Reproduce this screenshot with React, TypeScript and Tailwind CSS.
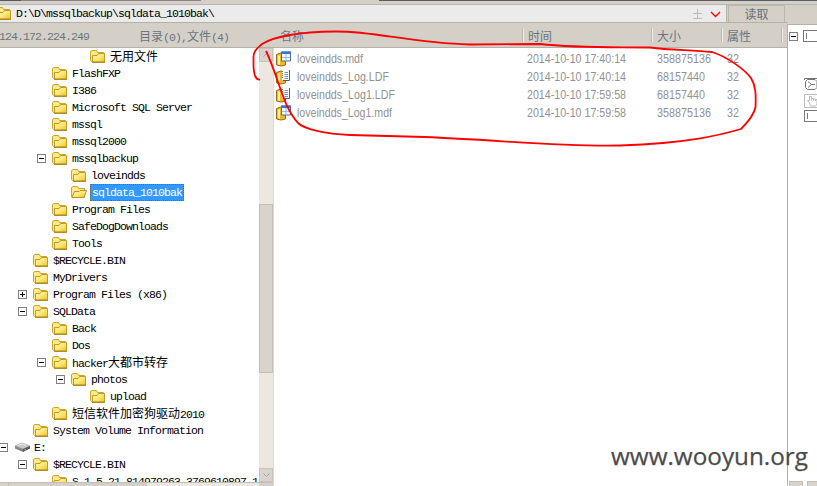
import React from "react";

const mono = "font-['Liberation_Mono','Noto_Sans_CJK_SC',monospace] text-[11.5px] tracking-[-0.9px]";
const cjk = "font-['Noto_Sans_CJK_SC',sans-serif] text-[12px] tracking-[0px]";

function Mixed({ text }: { text: string }) {
  const runs = text.split(/([\u4e00-\u9fff]+)/).filter(Boolean);
  return (
    <span className={`${mono} whitespace-pre leading-[17px]`}>
      {runs.map((r, i) => (/[\u4e00-\u9fff]/.test(r) ? <span key={i} className={cjk}>{r}</span> : r))}
    </span>
  );
}

function Folder({ open = false }: { open?: boolean }) {
  return (
    <svg width="16" height="14" viewBox="0 0 16 14" className="shrink-0 -mt-px">
      <defs>
        <linearGradient id="front" x1="0" y1="0" x2="1" y2="1">
          <stop offset="0" stopColor="#fff9b0" />
          <stop offset=".5" stopColor="#fce87a" />
          <stop offset="1" stopColor="#efc12c" />
        </linearGradient>
      </defs>
      <path d="M.5 11.500V2.500L2 1.500H6.500L7.500 3.500H13.500V12.500H1.500Z" fill="#ffe98a" stroke="#cda52b" />
      {open ? (
        <path d="M.8 12.500L3.500 6.500H8L9 5.500H15.500L13 12.500Z" fill="url(#front)" stroke="#bd9220" />
      ) : (
        <path d="M2.500 13V6.500H7L8.500 4.500H14.500V13Z" fill="url(#front)" stroke="#c39a22" />
      )}
      {!open && <path d="M2 13.300H15" stroke="#a67c0c" />}
    </svg>
  );
}

function Drive() {
  return (
    <svg width="17" height="11" viewBox="0 0 17 11" className="shrink-0">
      <path d="M1 4L8 1L16 4L9 7Z" fill="#c9c9c9" stroke="#999" strokeWidth=".6" />
      <path d="M1 4L9 7V10L1 6.500Z" fill="#858585" />
      <path d="M9 7L16 4V6.500L9 10Z" fill="#555" />
      <path d="M4 3.600L8 2L12 3.500" stroke="#eee" fill="none" />
      <path d="M10.500 8L12 7.400" stroke="#7d7" />
    </svg>
  );
}

function Toggle({ kind }: { kind: string }) {
  return (
    <span className="w-[9px] h-[9px] shrink-0 flex">
      {kind && (
        <svg width="9" height="9" viewBox="0 0 9 9" shapeRendering="crispEdges">
          <rect x=".5" y=".5" width="8" height="8" fill="#fff" stroke="#808080" />
          <path d={kind === "+" ? "M2 4.500H7M4.500 2V7" : "M2 4.500H7"} stroke="#000" />
        </svg>
      )}
    </span>
  );
}

type Row = [number, string, string, string?];
const rows: Row[] = [
  [4, "", "无用文件"],
  [2, "", "FlashFXP"],
  [2, "", "I386"],
  [2, "", "Microsoft SQL Server"],
  [2, "", "mssql"],
  [2, "", "mssql2000"],
  [2, "-", "mssqlbackup"],
  [3, "", "loveindds"],
  [3, "", "sqldata_1010bak", "open"],
  [2, "", "Program Files"],
  [2, "", "SafeDogDownloads"],
  [2, "", "Tools"],
  [1, "", "$RECYCLE.BIN"],
  [1, "", "MyDrivers"],
  [1, "+", "Program Files (x86)"],
  [1, "-", "SQLData"],
  [2, "", "Back"],
  [2, "", "Dos"],
  [2, "-", "hacker大都市转存"],
  [3, "-", "photos"],
  [4, "", "upload"],
  [2, "", "短信软件加密狗驱动2010"],
  [1, "", "System Volume Information"],
  [0, "-", "E:", "drive"],
  [1, "-", "$RECYCLE.BIN"],
  [2, "", "S-1-5-21-814979263-3769610897-1"],
];
const indents = ["ml-[-1px]", "ml-[18px]", "ml-[37px]", "ml-[56px]", "ml-[75px]"];

function TreeRow({ row }: { row: Row }) {
  const [level, toggle, name, kind] = row;
  return (
    <div className="h-[17px] shrink-0 flex items-center">
      <div className={`${indents[level]} flex items-center`}>
        <Toggle kind={toggle} />
        <span className="ml-[6px] w-4 flex">{kind === "drive" ? <Drive /> : <Folder open={kind === "open"} />}</span>
      </div>
      {kind === "open" ? (
        <span className="ml-[3px] h-[17px] w-[94px] pl-px flex items-center bg-[#3399ff] text-white border border-dotted border-[#a35b12]">
          <Mixed text={name} />
        </span>
      ) : (
        <span className="ml-1 flex"><Mixed text={name} /></span>
      )}
    </div>
  );
}

function DbIcon({ log }: { log: boolean }) {
  return (
    <svg width="16" height="16" viewBox="0 0 16 16" className="shrink-0">
      <path d="M.5 3.500Q5 .5 9.500 3.500V14Q5 16 .5 14Z" fill="#f0b81f" stroke="#94701b" />
      <path d="M2 4.500V13.500H4V4.500Z" fill="#fff0a0" />
      {log ? (
        <>
          <path d="M6 1H13V11H6Z" fill="#f4f8ff" />
          <path d="M13.500 1V11.500H7" stroke="#3f5c8c" fill="none" />
          <path d="M6 2.500H7M6 4.500H7M6 6.500H7M6 8.500H7" stroke="#a07818" />
          <path d="M8.500 3.500H12M8.500 5.500H12M8.500 7.500H12M8.500 9.500H12" stroke="#7c92b8" />
        </>
      ) : (
        <>
          <path d="M5.500 1H14.500V10H5.500Z" fill="#f3f8ff" stroke="#486da8" />
          <path d="M5 .5H15V3H5Z" fill="#3973dc" />
          <path d="M10 3V10M6 6.500H14" stroke="#9bb9e8" />
        </>
      )}
    </svg>
  );
}

const files: [string, string, string, number][] = [
  ["loveindds.mdf", "2014-10-10 17:40:14", "358875136", 66],
  ["loveindds_Log.LDF", "2014-10-10 17:40:14", "68157440", 92],
  ["loveindds_Log1.LDF", "2014-10-10 17:59:58", "68157440", 98],
  ["loveindds_Log1.mdf", "2014-10-10 17:59:58", "358875136", 95],
];

function Column({ label, width, first = false }: { label: string; width: string; first?: boolean }) {
  return (
    <div className={`${width} h-full shrink-0 flex items-center`}>
      {!first && <i className="w-[2px] h-[14px] bg-[#bdb8b0] border-r border-[#f1eee9]" />}
      <span className={`${cjk} text-[#6b7580] pt-[2px] ${first ? "pl-[7px]" : "pl-[4px]"}`}>{label}</span>
    </div>
  );
}

function Box() {
  return <div className="h-3 w-5 border border-[#777] pl-[2px] flex items-center"><i className="w-px h-[6px] bg-[#777]" /></div>;
}

export default function App() {
  return (
    <div className="relative w-[817px] h-[486px] overflow-hidden bg-[#d4d0c8] flex flex-col text-black">
      <div className="h-[5px] shrink-0 flex flex-col border-b border-[#bbb5ad]">
        <div className="h-px flex">
          <i className="w-[21px] bg-[#54585e]" /><i className="w-[180px] bg-[#85878c]" /><i className="w-[178px] bg-[#d4d0c8]" /><i className="flex-1 bg-[#5a5e64]" />
        </div>
      </div>
      <div className="flex-1 min-h-0 flex">
        <div className="w-[787px] shrink-0 flex flex-col">
          <div className="h-[18px] shrink-0 flex border-b border-[#b5b0a8]">
            <div className="w-[727px] bg-[#ebebeb] border-r border-[#b5b0a8] flex items-center">
              <div className="w-[12px] flex justify-end overflow-hidden shrink-0"><Folder /></div>
              <span className="ml-[4px] mt-[-1px] flex-1 flex"><Mixed text={"D:\\D\\mssqlbackup\\sqldata_1010bak\\"} /></span>
              <svg width="30" height="12" viewBox="0 0 30 12" className="mr-[4px]">
                <path d="M1 10.500H10M1 5.500H10M5.500 1V10" stroke="#bbb" fill="none" />
                <path d="M19 4L23.500 8.500L28 4" stroke="#ff0000" strokeWidth="1.300" fill="none" />
              </svg>
            </div>
            <div className={`${cjk} ml-px w-[57px] border border-b-0 border-[#bbb6ae] text-[#68717b] flex items-center justify-center`}>读取</div>
          </div>
          <div className="h-[25px] shrink-0 flex items-center border-b border-[#b5b0a8] text-[#6b7580]">
            <div className="w-[273px] shrink-0 flex items-center pt-[2px]">
              <span className="w-[139px] flex -ml-px mr-px"><Mixed text="124.172.224.249" /></span>
              <Mixed text="目录(0),文件(4)" />
            </div>
            <Column first label="名称" width="w-[249px]" />
            <Column label="时间" width="w-[129px]" />
            <Column label="大小" width="w-[70px]" />
            <Column label="属性" width="w-[60px]" />
            <i className="w-[2px] h-[14px] bg-[#bdb8b0] border-r border-[#f1eee9]" />
          </div>
          <div className="flex-1 min-h-0 flex">
            <div className="w-[273px] shrink-0 flex flex-col">
              <div className="h-[434px] flex">
                <div className="w-[259px] overflow-hidden bg-white flex flex-col">
                  {rows.map((r, i) => <TreeRow key={i} row={r} />)}
                </div>
                <div className="w-[14px] bg-[#ece8e1] flex flex-col">
                  <div className="h-[14px] bg-[#d8d4cd] border border-[#c8c3bb] flex items-center justify-center">
                    <svg width="7" height="4"><path d="M.5 3.500L3.500 .5L6.500 3.500" fill="none" stroke="#a7a7a7" /></svg>
                  </div>
                  <div className="mt-[142px] h-[169px] bg-[#d8d4cd] border border-[#c3beb6]" />
                  <div className="mt-auto h-[14px] bg-[#d8d4cd] border border-[#c8c3bb] flex items-center justify-center">
                    <svg width="7" height="4"><path d="M.5 .5L3.500 3.500L6.500 .5" fill="none" stroke="#a0a4aa" /></svg>
                  </div>
                </div>
              </div>
              <div className="flex-1 flex border-t border-[#c3beb6]">
                <i className="w-[9px] border-r border-[#c3beb6]" /><i className="w-[138px]" /><i className="w-[112px] bg-[#ece8e1]" />
              </div>
            </div>
            <div className="flex-1 bg-white border-l border-[#dedad4] pt-[2px] font-['Liberation_Sans',sans-serif] text-[12px] text-[#929292]">
              {files.map((f, i) => (
                <div key={i} className="h-[18px] flex items-center pl-[2px]">
                  <DbIcon log={i === 1 || i === 2} />
                  <svg width="490" height="18" className="ml-[5px]" fill="currentColor">
                    <text x="0" y="13" textLength={f[3]} lengthAdjust="spacingAndGlyphs">{f[0]}</text>
                    <text x="230" y="13" textLength="99" lengthAdjust="spacingAndGlyphs">{f[1]}</text>
                    <text x="360" y="13" textLength={f[2].length * 6} lengthAdjust="spacingAndGlyphs">{f[2]}</text>
                    <text x="430" y="13" textLength="12" lengthAdjust="spacingAndGlyphs">32</text>
                  </svg>
                </div>
              ))}
            </div>
          </div>
        </div>
        <div className="flex-1 flex flex-col">
          <div className="h-[19px] shrink-0" />
          <div className="flex-1 bg-white border-t border-l border-[#b5b0a8] flex flex-col">
            <div className="mt-[5px] flex items-start">
              <span className="mt-[2px] ml-px"><Toggle kind="-" /></span>
              <span className="ml-[5px]"><Box /></span>
            </div>
            <svg width="14" height="33" viewBox="0 0 14 33" className="ml-[16px] mt-[35px]" fill="none" stroke="#777">
              <path d="M.5 3V1.500H14M3.500 2.500L1.500 4.500V10.500L3.500 12.500H11L13 10.500V4.500L11 2.500ZM4 4.500L7.500 7.500H11M4 10.500L7.500 7.500" />
              <path d="M.5 17.500H16M.5 17.500V30.500H16M5.500 26L3.500 23.500H5.500V19.500H7.500V23.500V21.500H9.500V23.500V22H11.500V24V22.500H13V27L11.500 29H6.500Z" stroke="#bbb" />
            </svg>
            <div className="ml-[16px]"><Box /></div>
            <div className="mt-auto flex gap-[4px] h-[5px]">
              <i className="ml-px w-[14px] bg-[#d8d4cd] border border-b-0 border-[#c3beb6]" /><i className="flex-1 bg-[#d8d4cd] border border-b-0 border-[#c3beb6]" />
            </div>
          </div>
        </div>
      </div>
      <svg className="absolute inset-0 pointer-events-none" width="817" height="486" fill="none">
        <path d="M260 79.500C255 80 254 74 253.500 66V57C253.500 50 258 48 262 44C275 36 300 32 335 31.500C375 31 410 43 470 44.500L540 44C575 48 610 47 650 47.500C670 50 690 50 712 52C728 57 745 70 751 78C756 86 756 95 755.500 107C754 115 746 124 741 129C720 135 690 143 620 145.500C560 147 500 140 425 137L350 135C325 134 304 129 298 123C282 105 279 78 266 51" stroke="#ff0000" strokeWidth="1.800" />
        <text x="611" y="465" fill="#4b4b4b" stroke="#4b4b4b" strokeWidth=".25" fontFamily="Open Sans, sans-serif" fontSize="24" textLength="197" lengthAdjust="spacingAndGlyphs">www.wooyun.org</text>
      </svg>
    </div>
  );
}
